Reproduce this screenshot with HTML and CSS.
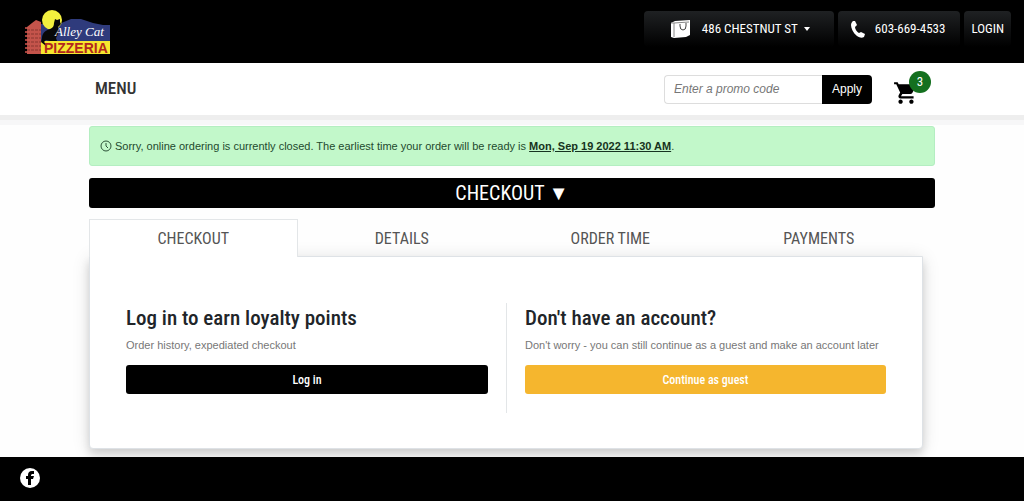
FILE: index.html
```html
<!DOCTYPE html>
<html lang="en">
<head>
<meta charset="UTF-8">
<meta name="viewport" content="width=device-width, initial-scale=1.0">
<title>Checkout - Alley Cat Pizzeria</title>
<link rel="stylesheet" href="styles.css">
</head>
<body>

<header class="top-bar">
	<a class="logo" href="#" aria-label="Alley Cat Pizzeria">
		<svg width="88" height="46" viewBox="0 0 88 46">
			<path fill="#2f3b7c" d="M17 15h18l12-5h10l12 4 10 2h7v16H17z"/>
			<circle cx="28" cy="11" r="10" fill="#f3f03e"/>
			<path fill="#c4544b" d="M3 18l5-4 4-3 5 2v32H3z"/>
			<path fill="none" stroke="#8a3631" stroke-dasharray="3 1" d="M3 21h14M3 25h14M3 29h14M3 33h14M3 37h14M3 41h14"/>
			<path fill="#9c3f3a" d="M1 18h2v2H1zM1 22h2v2H1zM1 26h2v2H1zM1 30h2v2H1zM1 34h2v2H1zM1 38h2v2H1zM1 42h2v2H1z"/>
			<path fill="#f6e72e" d="M17 32h69v13H17z"/>
			<path fill="#080808" d="M18 29c0-5 4-8 8-9 3-1 4-3 4-6l1-4 2 1 3-1v3l1 2-3 3c1 4 0 8-2 11l1 3h-7l-4-1-2 2 3 3-1 1-5-4z"/>
			<text class="logo-script" x="31" y="27">Alley Cat</text>
			<text class="logo-name" x="20" y="44">PIZZERIA</text>
		</svg>
	</a>
	<nav class="top-nav">
		<button class="top-btn location" type="button">
			<svg width="22" height="20" viewBox="0 0 22 20">
				<path fill="#fff" d="M1 4l4-2 15-1v15l-4 2-12 1-3-1z"/>
				<path fill="none" stroke="#888" d="M1 4h3v14M4 4l15-1"/>
				<path fill="none" stroke="#444" d="M10 5v2q0 4 3 4t3-4V4"/>
			</svg>
			<span>486 CHESTNUT ST</span>
			<i class="caret"></i>
		</button>
		<a class="top-btn phone" href="tel:6036694533">
			<svg width="14" height="18" viewBox="0 0 14 18">
				<path fill="#fff" d="M2 1h2l2 4-2 2c0 2 2 5 4 6l2-1 4 2-1 3c-2 1-4 1-7-1-4-3-6-8-6-11 0-2 1-3 2-4z"/>
			</svg>
			<span>603-669-4533</span>
		</a>
		<a class="top-btn login" href="#">LOGIN</a>
	</nav>
</header>

<div class="menu-bar">
	<div class="container menu-row">
		<a class="menu-link" href="#">MENU</a>
		<form class="promo">
			<input type="text" placeholder="Enter a promo code" aria-label="Promo code">
			<button type="button">Apply</button>
		</form>
		<a class="cart" href="#" aria-label="Cart">
			<svg width="26" height="26" viewBox="0 0 24 24">
				<path d="M7 18c-1.100 0-2 .900-2 2s.900 2 2 2 2-.900 2-2-.900-2-2-2zM1 2v2h2l3.600 7.600-1.400 2.400C4.500 15.400 5.500 17 7 17h12v-2H7.400l1.200-2h7.400c.800 0 1.400-.400 1.800-1L21.500 5c.300-.600-.200-1-.900-1H5.200L4.300 2H1zM17 18c-1.100 0-2 .900-2 2s.900 2 2 2 2-.900 2-2-.900-2-2-2z"/>
				<path d="M6 5h14l-4 7H9z"/>
			</svg>
			<span class="badge">3</span>
		</a>
	</div>
</div>

<main class="container">
	<div class="notice">
		<svg width="12" height="12" viewBox="0 0 12 12">
			<circle cx="6" cy="6" r="5" fill="none" stroke="#2c5238"/>
			<path fill="none" stroke="#2c5238" d="M6 3v3l2 2"/>
		</svg>
		<p>Sorry, online ordering is currently closed. The earliest time your order will be ready is <a href="#">Mon, Sep 19 2022 11:30 AM</a>.</p>
	</div>

	<h1 class="page-title">CHECKOUT ▼</h1>

	<div class="steps">
		<nav class="tabs">
			<a class="active" href="#">CHECKOUT</a>
			<a href="#">DETAILS</a>
			<a href="#">ORDER TIME</a>
			<a href="#">PAYMENTS</a>
		</nav>
		<div class="panel">
			<section>
				<h2>Log in to earn loyalty points</h2>
				<p>Order history, expediated checkout</p>
				<button class="btn" type="button">Log in</button>
			</section>
			<section>
				<h2>Don't have an account?</h2>
				<p>Don't worry - you can still continue as a guest and make an account later</p>
				<button class="btn btn-guest" type="button">Continue as guest</button>
			</section>
		</div>
	</div>
</main>

<footer class="footer">
	<a href="#" aria-label="Facebook">
		<svg width="20" height="20" viewBox="0 0 20 20">
			<circle cx="10" cy="10" r="10" fill="#fff"/>
			<path d="M8 17v-6H6V8h2V7c0-2 1-4 4-4h2v3h-2l-1 1v1h3l-1 3h-2v6z"/>
		</svg>
	</a>
</footer>

</body>
</html>
```
FILE: styles.css
```css
*{box-sizing:border-box;}
body,h1,h2,p{margin:0;padding:0;}
a{color:inherit;text-decoration:none;}
svg{display:block;flex-shrink:0;}
button,input{font:inherit;border:0;margin:0;}
button{cursor:pointer;}
body{display:flex;flex-direction:column;min-height:100vh;background:#fefefe;color:#212529;font:12px/16px "Liberation Sans",Arial,sans-serif;}
.container{width:100%;max-width:846px;margin:0 auto;}

/* top bar */
.top-bar{display:flex;justify-content:space-between;align-items:flex-start;padding:9px 13px 8px 24px;background:#000;}
.top-nav{display:flex;gap:4px;padding-top:2px;}
.top-btn{display:flex;align-items:center;justify-content:center;height:36px;border-radius:4px;background:linear-gradient(#1f2123,#000);color:#fff;font:13px/20px "Roboto Condensed","Liberation Sans Narrow",sans-serif;}
.location{gap:10px;padding:0 24px 0 26px;}
.location .caret{margin-left:-4px;}
.phone{gap:10px;padding:0 15px 0 13px;}
.login{padding:0 7px;}
.caret{border:3px solid transparent;border-top:4px solid #fff;border-bottom:0;}
.logo-script{font:italic 13px "Liberation Serif",serif;fill:#fff;}
.logo-name{font:bold 14px "Liberation Sans",sans-serif;fill:#b3261e;}

/* menu and promo code */
.menu-bar{background:#fff;border-bottom:5px solid #eee;box-shadow:0 5px 0 #f7f7f8;}
.menu-row{display:flex;align-items:center;height:52px;padding:0 4px 0 6px;}
.menu-link{margin-right:auto;padding-bottom:2px;color:#333;font:500 17px/24px "Roboto Condensed","Liberation Sans Narrow",sans-serif;}
.promo{display:flex;}
.promo input{width:158px;height:29px;padding:0 9px;border:1px solid #ddd;border-right:0;border-radius:4px 0 0 4px;background:#fff;}
.promo input::placeholder{color:#777;font-style:italic;}
.promo button{padding:0 10px;border-radius:0 4px 4px 0;background:#000;color:#fff;}
.cart{position:relative;margin-left:21px;padding:8px 12px 0 0;}
.badge{position:absolute;top:-1px;right:0;width:22px;height:22px;border-radius:50%;background:#14701f;color:#fff;font:13px/22px "Roboto Condensed","Liberation Sans Narrow",sans-serif;text-align:center;}

/* closed notice */
.notice{display:flex;align-items:center;gap:3px;min-height:40px;margin:6px 0 12px;padding:0 10px;border:1px solid #b4eec1;border-radius:3px;background:#c2f8ca;color:#234a2e;font-size:11px;}
.notice a{color:#163320;font-weight:bold;text-decoration:underline;}
.page-title{border-radius:3px;background:#000;color:#fff;font:20px/30px "Roboto Condensed","Liberation Sans Narrow",sans-serif;text-align:center;}

/* checkout steps */
.steps{margin:11px 12px 8px 0;}
.tabs{display:grid;grid-template-columns:repeat(4,1fr);}
.tabs a{padding:7px 0 5px;border:1px solid transparent;border-bottom:0;color:#555;font:16px/24px "Roboto Condensed","Liberation Sans Narrow",sans-serif;text-align:center;}
.tabs .active{position:relative;z-index:1;margin-bottom:-1px;padding-bottom:6px;border-color:#e3e6e8;background:#fff;}
.panel{display:grid;grid-template-columns:1fr 1fr;padding:46px 18px 35px;border:1px solid #dee2e6;border-radius:0 0 4px 4px;background:#fff;box-shadow:0 2px 18px rgba(0,0,0,.12),0 6px 8px rgba(0,0,0,.12);}
.panel section{padding:0 18px 19px;}
.panel section + section{border-left:1px solid #e3e6e8;}
.panel h2{font:500 21px/30px "Roboto Condensed","Liberation Sans Narrow",sans-serif;}
.panel p{margin:4px 0 12px;color:#777;font-size:11px;}
.btn{display:block;width:100%;height:29px;border-radius:3px;background:#000;color:#fff;font:500 12px/18px "Roboto Condensed","Liberation Sans Narrow",sans-serif;}
.btn-guest{background:#f5b62e;}

.footer{position:relative;display:flex;flex:1;align-items:flex-start;padding:11px 20px 13px;background:#000;}
```
